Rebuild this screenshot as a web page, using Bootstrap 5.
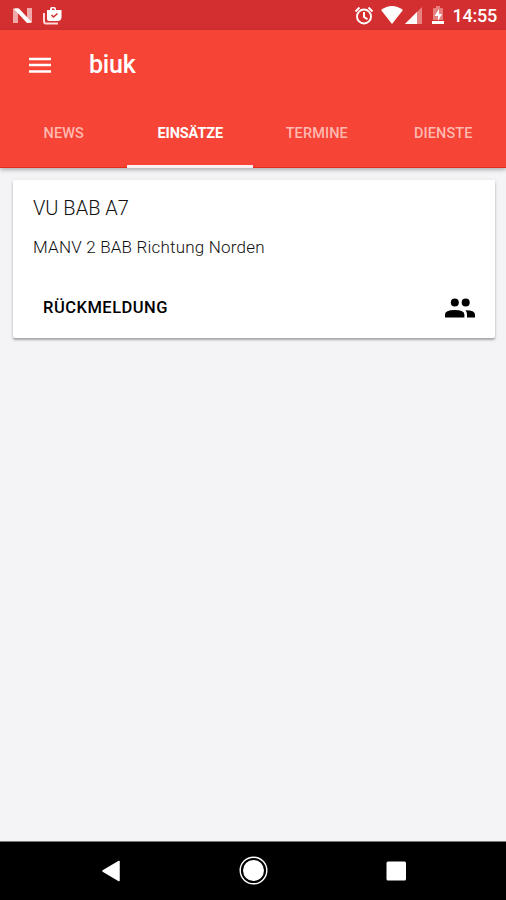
<!DOCTYPE html>
<html lang="de">
<head>
<meta charset="utf-8">
<meta name="viewport" content="width=device-width, initial-scale=1">
<title>biuk</title>
<link href="https://cdn.jsdelivr.net/npm/bootstrap@5.3.0/dist/css/bootstrap.min.css" rel="stylesheet">
<style>
body{font-family:Roboto,"Liberation Sans",sans-serif;background:#f4f4f7;height:900px;overflow:hidden}
svg{display:block;flex:none}
.status{height:30px;background:#d32f30;color:#fff;padding:0 9px 0 13px}
.clock{font-size:18px;font-weight:500;line-height:30px;letter-spacing:-.25px;padding-top:2px}
.app-head{background:#f64436;color:#fff;box-shadow:0 2px 4px rgba(0,0,0,.28);z-index:1}
.toolbar{height:70px;padding-left:29px}
.brand{font-size:25px;font-weight:500;line-height:30px;letter-spacing:-.2px;margin-left:38px;color:#fff}
.tabs{height:68px}
.tabs .nav-link{color:#ffb9b1;font-size:14.5px;font-weight:500;height:68px;padding:0 0 0 1px;border-radius:0;border-bottom:1px solid #e32d1c;line-height:67px;letter-spacing:.1px}
.tabs .nav-link.active{color:#fff;font-weight:700;border-bottom:3px solid #fdf0f2;letter-spacing:-.1px}
.event{margin:12px 11px 0 13px;height:158px;border:0;border-radius:2px;box-shadow:0 2px 2px rgba(0,0,0,.26),0 1px 4px rgba(0,0,0,.12);padding:0 20px;color:#111}
.event h2{font-size:20px;font-weight:300;line-height:24px;margin:16px 0 0;letter-spacing:0}
.event p{font-size:17px;font-weight:300;line-height:22px;margin:16px 0 0;letter-spacing:.2px;color:#111}
.event .btn{font-size:16.5px;font-weight:500;color:#000;padding:0 10px;line-height:24px;border:0;letter-spacing:.5px}
.actions{margin-top:38px}
.navkeys{height:59px;background:#000;border-top:1px solid #777}
</style>
<script src="https://cdn.jsdelivr.net/npm/bootstrap@5.3.0/dist/js/bootstrap.bundle.min.js"></script>
</head>
<body class="d-flex flex-column">
<div class="status d-flex align-items-center">
  <svg width="20" height="30" viewBox="0 0 20 30"><path d="M0 9l5-1v15H0zM14 8h5v14l-5 1z" fill="#f0a9a9"/><path d="M0.500 8.500H6L19 22.500 14 23z" fill="#fff"/></svg>
  <svg class="ms-2" width="24" height="30" viewBox="0 0 24 30"><path d="M3 13v8q0 2.500 2 2.500h12" fill="none" stroke="#ffd9d9" stroke-width="2"/><path d="M6 10h3V9q0-2 2-2h2q2 0 2 2v1h5.500v7q0 4-4 4H8q-2 0-2-2z" fill="#fff"/><path d="M11 10V8.500h2.500V10z" fill="#d32f30"/><path d="M10.500 15l2 2 4-3.500" fill="none" stroke="#d32f30" stroke-width="1.600"/></svg>
  <svg class="ms-auto" width="20" height="30" viewBox="0 0 20 30"><g fill="none" stroke="#fff" stroke-width="1.900"><circle cx="10" cy="16.500" r="7"/><path d="M1.500 11.500l4-4M18.500 11.500l-4-4M10 12v5l3.500 2.200"/></g></svg>
  <svg class="ms-1" width="71" height="30" viewBox="0 0 71 30">
    <path d="M3 10Q14 2 25 10L14 24z" fill="#fff"/>
    <path d="M44 7v17H27z" fill="#ea8181"/><path d="M39 12v12H27z" fill="#fff"/>
    <path d="M56 8h2V6h4v2h2q1 0 1 1v11H55V9q0-1 1-1z" fill="#e87f7f"/><path d="M54 21h12v3H54z" fill="#fff"/><path d="M61 9l-4.500 7H60v5l4-7h-3z" fill="#fff"/>
  </svg>
  <div class="clock ms-1">14:55</div>
</div>
<header class="app-head position-relative">
  <div class="toolbar d-flex align-items-center">
    <svg width="22" height="18" viewBox="0 0 22 18"><path d="M0 3h22M0 9h22M0 15.500h22" stroke="#fff" stroke-width="2.600"/></svg>
    <h1 class="brand mb-0">biuk</h1>
  </div>
  <nav class="tabs nav nav-justified">
    <a class="nav-link" href="#">NEWS</a>
    <a class="nav-link active" href="#">EINSÄTZE</a>
    <a class="nav-link" href="#">TERMINE</a>
    <a class="nav-link" href="#">DIENSTE</a>
  </nav>
</header>
<main class="flex-grow-1">
  <article class="event card">
    <h2>VU BAB A7</h2>
    <p>MANV 2 BAB Richtung Norden</p>
    <div class="actions d-flex align-items-center justify-content-between">
      <button class="btn" type="button">RÜCKMELDUNG</button>
      <svg width="30" height="20" viewBox="0 0 30 20"><circle cx="9.800" cy="4.600" r="4"/><circle cx="20.700" cy="4.600" r="4"/><path d="M0 19.500v-3q0-4.500 9.700-4.500t9.700 4.500v3zM20.500 12.200q9.500 0 9.500 4.300v3h-8v-3q0-2.500-1.500-4.300z"/></svg>
    </div>
  </article>
</main>
<footer class="navkeys d-flex align-items-center justify-content-between">
  <svg class="mx-auto" width="506" height="58" viewBox="0 0 506 58" fill="#fff">
    <path d="M103 29l16-9.500v19z" stroke="#fff" stroke-width="1.500" stroke-linejoin="round"/>
    <circle cx="253.500" cy="28.500" r="10.500"/><circle cx="253.500" cy="28.500" r="13.300" fill="none" stroke="#fff" stroke-width="1.400"/>
    <rect x="386.500" y="19.500" width="19.500" height="19" rx="1.500"/>
  </svg>
</footer>
</body>
</html>
